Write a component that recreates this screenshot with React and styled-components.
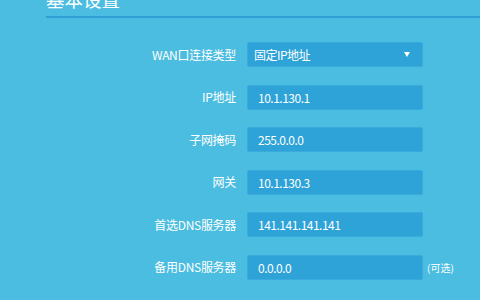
import styled, { createGlobalStyle } from "styled-components";

const GlobalStyle = createGlobalStyle`
    html, body {
        margin: 0;
        padding: 0;
        background: #4bbde0;
        overflow: hidden;
    }
    body {
        font-family: "Noto Sans CJK SC", "Noto Sans", sans-serif;
        color: #ffffff;
    }
`;

const Page = styled.div`
    width: 480px;
    height: 300px;
    padding-left: 46px;
    box-sizing: border-box;
`;

const Header = styled.div`
    margin-top: -10px;
    padding-bottom: 7px;
    border-bottom: 2px solid #2ea0d6;
`;

const Title = styled.h1`
    margin: 0;
    font-size: 18.5px;
    line-height: 19px;
    font-weight: normal;
`;

const Form = styled.div`
    margin-top: 24px;
    display: flex;
    flex-direction: column;
    gap: 17.5px;
`;

const Row = styled.div`
    display: grid;
    grid-template-columns: 190px 176px auto;
    column-gap: 11px;
    align-items: center;
    height: 25px;
`;

const Label = styled.label`
    text-align: right;
    font-size: 12px;
    line-height: 16px;
    letter-spacing: -0.3px;
`;

const Field = styled.div`
    height: 25px;
    box-sizing: border-box;
    display: flex;
    align-items: center;
    justify-content: space-between;
    padding: 0 ${(p) => (p.$select ? "12px 0 6px" : "10px")};
    background: #2ea3d8;
    border: 1px solid #3aaadc;
    border-radius: 2px;
    font-size: 12px;
    letter-spacing: -0.5px;
`;

const Arrow = styled.span`
    width: 0;
    height: 0;
    border-left: 3.5px solid transparent;
    border-right: 3.5px solid transparent;
    border-top: 5px solid #ffffff;
`;

const Note = styled.span`
    margin-left: -7px;
    font-size: 10px;
`;

const rows = [
    { label: "WAN口连接类型", value: "固定IP地址", select: true },
    { label: "IP地址", value: "10.1.130.1" },
    { label: "子网掩码", value: "255.0.0.0" },
    { label: "网关", value: "10.1.130.3" },
    { label: "首选DNS服务器", value: "141.141.141.141" },
    { label: "备用DNS服务器", value: "0.0.0.0", note: "(可选)" },
];

export default function App() {
    return (
        <>
            <GlobalStyle />
            <Page>
                <Header>
                    <Title>基本设置</Title>
                </Header>
                <Form>
                    {rows.map((row) => (
                        <Row key={row.label}>
                            <Label>{row.label}</Label>
                            <Field $select={row.select}>
                                <span>{row.value}</span>
                                {row.select && <Arrow />}
                            </Field>
                            {row.note ? <Note>{row.note}</Note> : <span />}
                        </Row>
                    ))}
                </Form>
            </Page>
        </>
    );
}
